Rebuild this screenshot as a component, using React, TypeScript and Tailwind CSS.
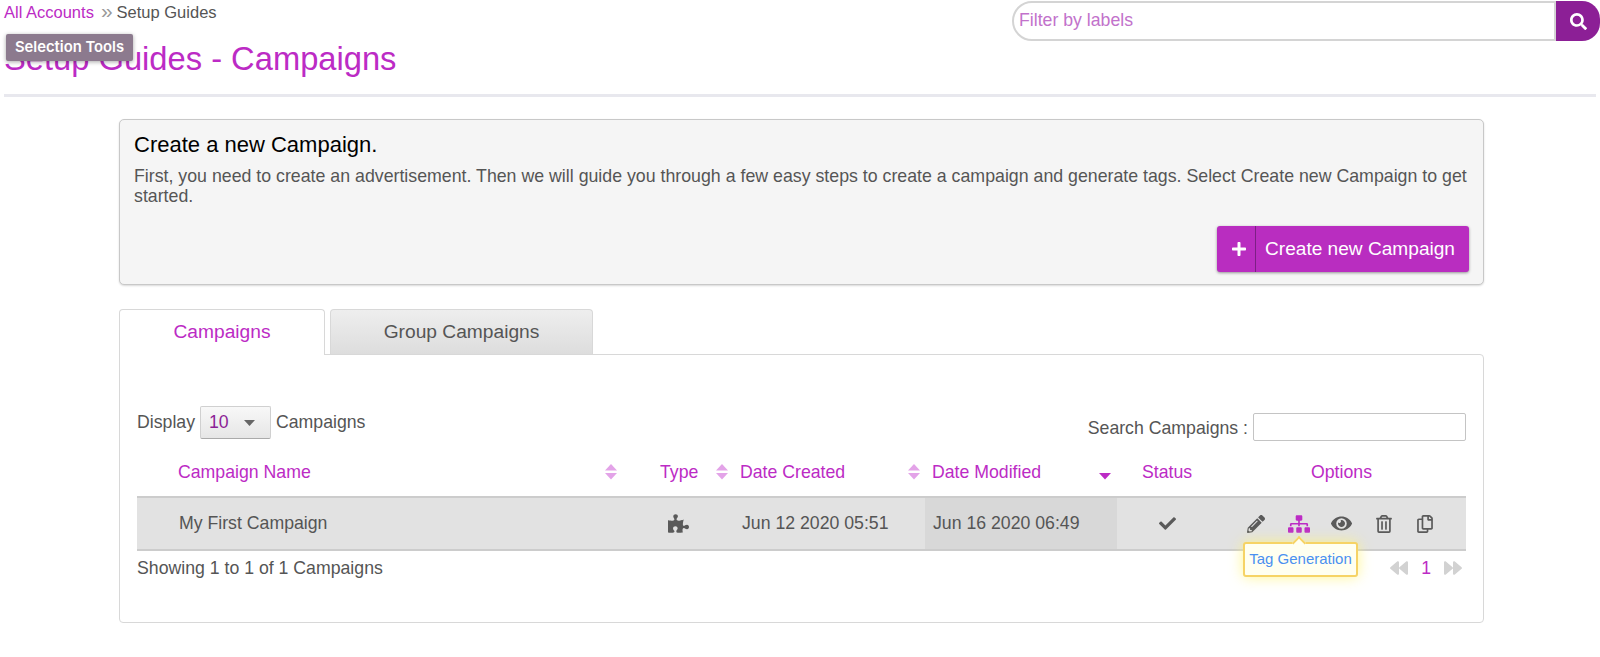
import {
  FaBackward,
  FaCheck,
  FaEye,
  FaForward,
  FaPencilAlt,
  FaPlus,
  FaPuzzlePiece,
  FaRegCopy,
  FaRegTrashAlt,
  FaSearch,
  FaSitemap,
} from "react-icons/fa";

const SortIcon = ({ down }: { down?: boolean }) => (
  <svg width="12" height="16" viewBox="0 0 12 16" className="shrink-0">
    {!down && <path d="M6 0 L12 6.5 L0 6.5 Z" fill="#e3a3e8" />}
    <path d="M0 9 L12 9 L6 15.5 Z" fill={down ? "#bc2bc5" : "#e3a3e8"} />
  </svg>
);

const HeaderCell = ({ label }: { label: string }) => (
  <span className="text-[17.7px] text-[#bc2bc5]">{label}</span>
);

const App = () => {
  return (
    <main className="relative h-[657px] overflow-hidden bg-white font-['Liberation_Sans',Arial,sans-serif] text-[17.7px] text-[#555]">
      <div className="absolute left-[6px] top-[34px] z-10 flex h-[27px] w-[127px] items-center justify-center rounded-[2px] bg-[#8c7a8e] font-['Inter',sans-serif] text-[14.8px] font-semibold text-white shadow-[0_1px_4px_rgba(0,0,0,0.35)]">
        Selection Tools
      </div>

      <header className="mx-[4px] flex h-[97px] justify-between border-b-[3px] border-[#e8e8ee]">
        <div>
          <div className="flex items-center text-[16.5px]">
            <a className="text-[#bc2bc5]">All Accounts</a>
            <span className="mb-[4px] ml-[7px] mr-[4px] text-[21px] leading-[21px] text-[#999]">»</span>
            <span>Setup Guides</span>
          </div>
          <h1 className="mt-[14px] text-[32.7px] leading-[40px] text-[#bc2bc5]">
            Setup Guides - Campaigns
          </h1>
        </div>
        <div className="-mr-[4px] mt-[1px] flex h-[40px] w-[588px]">
          <div className="flex flex-1 items-center rounded-l-[20px] border-2 border-[#d4d4d4] pb-[1px] pl-[5px] text-[#c272cb]">
            Filter by labels
          </div>
          <div className="flex w-[44px] items-center justify-center rounded-r-[18px] bg-[#8c1f96] text-white">
            <FaSearch size={17} />
          </div>
        </div>
      </header>

      <div className="ml-[119px] mt-[22px] w-[1365px]">
        <section className="h-[166px] rounded-[5px] border border-[#c8c8c8] bg-[#f5f5f5] px-[14px] pt-[12px] shadow-[0_1px_2px_rgba(0,0,0,0.15)]">
          <h2 className="text-[22px] leading-[26px] text-black">Create a new Campaign.</h2>
          <p className="mt-[8px] text-[17.76px] leading-[20px]">
            First, you need to create an advertisement. Then we will guide you through a few easy
            steps to create a campaign and generate tags. Select Create new Campaign to get started.
          </p>
          <div className="mt-[20px] flex justify-end">
            <button className="flex h-[46px] w-[252px] items-center rounded-[3px] bg-[#b92dc0] text-[19.1px] text-white shadow-[0_1px_3px_rgba(0,0,0,0.4)]">
              <span className="flex h-full w-[39px] items-center justify-center border-r border-[#7d1f85] pl-[6px]">
                <FaPlus size={16} />
              </span>
              <span className="pl-[9px]">Create new Campaign</span>
            </button>
          </div>
        </section>

        <div className="mt-[24px] flex gap-[5px]">
          <div className="z-10 -mb-px flex h-[46px] w-[206px] items-center justify-center rounded-t-[4px] border border-b-0 border-[#d8d8d8] bg-white text-[19.2px] text-[#bc2bc5]">
            Campaigns
          </div>
          <div className="flex h-[45px] w-[263px] items-center justify-center rounded-t-[4px] border border-b-0 border-[#d8d8d8] bg-gradient-to-b from-[#eeeeee] to-[#dddddd] text-[19.2px]">
            Group Campaigns
          </div>
        </div>

        <section className="relative h-[269px] rounded-b-[4px] rounded-tr-[4px] border border-[#d8d8d8] px-[17px]">
          <div className="flex h-[93px] items-start justify-between">
            <div className="mt-[51px] flex items-center">
              <span>Display</span>
              <div className="ml-[5px] mr-[5px] flex h-[33px] w-[71px] items-center rounded-[2px] border border-[#d0d0d0] border-b-[#aaa] bg-gradient-to-b from-[#f8f8f8] to-[#e6e6e6] pl-[8px] text-[#8c1f96]">
                10
                <svg width="11" height="6" viewBox="0 0 11 6" className="ml-[15px]">
                  <path d="M0 0 L11 0 L5.5 6 Z" fill="#666" />
                </svg>
              </div>
              <span>Campaigns</span>
            </div>
            <div className="mt-[57px] flex items-center">
              <span className="mr-[5px] pt-[3px]">Search Campaigns :</span>
              <div className="h-[28px] w-[213px] rounded-[2px] border border-[#c4c4c4] bg-white" />
            </div>
          </div>

          <div className="grid h-[48px] grid-cols-[503px_90px_195px_192px_100px_249px] items-center">
            <div className="flex items-center justify-between pl-[41px] pr-[23px]">
              <HeaderCell label="Campaign Name" />
              <SortIcon />
            </div>
            <div className="flex items-center justify-between pl-[20px] pr-[2px]">
              <HeaderCell label="Type" />
              <SortIcon />
            </div>
            <div className="flex items-center justify-between pl-[10px] pr-[5px]">
              <HeaderCell label="Date Created" />
              <SortIcon />
            </div>
            <div className="flex items-center justify-between pl-[7px] pr-[6px]">
              <HeaderCell label="Date Modified" />
              <SortIcon down />
            </div>
            <div className="text-center">
              <HeaderCell label="Status" />
            </div>
            <div className="text-center">
              <HeaderCell label="Options" />
            </div>
          </div>

          <div className="grid h-[55px] grid-cols-[503px_90px_195px_192px_100px_249px] items-center border-y-2 border-[#cccccc] bg-[#e2e2e2]">
            <div className="pl-[42px]">My First Campaign</div>
            <div className="flex justify-center pr-[14px]">
              <FaPuzzlePiece size={21} color="#5a5a5a" />
            </div>
            <div className="pl-[12px]">Jun 12 2020 05:51</div>
            <div className="flex h-full items-center bg-[#d8d8d8] pl-[8px]">Jun 16 2020 06:49</div>
            <div className="flex justify-center">
              <FaCheck size={17} color="#5a5a5a" />
            </div>
            <div className="relative flex items-center pl-[30px] text-[#5a5a5a]">
              <FaPencilAlt size={18} className="mr-[23px]" />
              <FaSitemap size={22} color="#bc2bc5" className="mr-[21px]" />
              <FaEye size={21} className="mr-[23px]" />
              <FaRegTrashAlt size={18} className="mr-[23px]" />
              <FaRegCopy size={18} />
              <div className="absolute left-[26px] top-[29px] z-10 flex h-[35px] w-[115px] items-center justify-center rounded-[3px] border-2 border-[#f6d365] bg-[#fffff0] text-[15px] text-[#4a90f0] shadow-[0_0_14px_rgba(255,245,120,0.8)]">
                Tag Generation
                <span className="absolute -top-[6px] left-[49px] size-[10px] rotate-45 border-l-2 border-t-2 border-[#f6d365] bg-[#fffff0]" />
              </div>
            </div>
          </div>

          <div className="flex h-[34px] items-center justify-between">
            <span>Showing 1 to 1 of 1 Campaigns</span>
            <div className="mr-[4px] flex items-center gap-[13px] text-[#d2d2d2]">
              <FaBackward size={18} />
              <span className="text-[#bc2bc5]">1</span>
              <FaForward size={18} />
            </div>
          </div>
        </section>
      </div>
    </main>
  );
};

export default App;
